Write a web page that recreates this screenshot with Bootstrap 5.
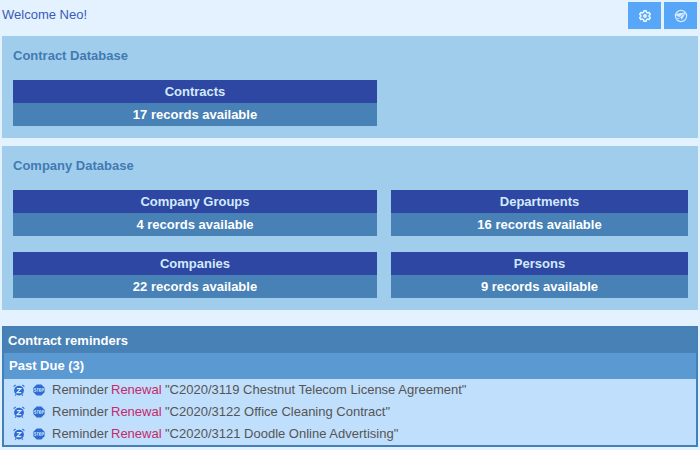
<!DOCTYPE html>
<html lang="en">
<head>
<meta charset="utf-8">
<meta name="viewport" content="width=device-width, initial-scale=1">
<title>Contract Database</title>
<link href="https://cdn.jsdelivr.net/npm/bootstrap@5.3.0/dist/css/bootstrap.min.css" rel="stylesheet">
<style>
body { background: #e4f1fe; font-family: "Liberation Sans", Arial, sans-serif; font-size: 13px; line-height: 18px; color: #555; padding: 2px 2px 4px; }
.top-bar { margin-bottom: 7px; }
.welcome { color: #3a5cb8; padding-top: 4px; }
.tool-btn { width: 33px; height: 27px; background: #57a6f7; border-radius: 0; }
.tool-btn:hover { background: #3f93ea; }
.tools { gap: 3px; padding-right: 1px; }
.db-panel { background: #a1cdec; padding: 11px 10px 12px 11px; }
.db-title { color: #427ab3; font-size: 13px; line-height: 18px; margin-bottom: 15px; }
.tiles { display: grid; grid-template-columns: 364fr 297fr; gap: 16px 14px; }
.tile-name { background: #2e47a3; color: #d3eafc; line-height: 23px; }
.tile-count { background: #4781b5; color: #fff; line-height: 23px; }
.reminders { background: #c0dffc; border: 2px solid #4480b7; margin-top: 16px; }
.rem-head { background: #4781b5; font-size: 13px; line-height: 25px; padding-left: 4px; }
.rem-sub { background: #5b99d2; font-size: 13px; line-height: 26px; padding-left: 5px; }
.rem-row { line-height: 22px; padding-left: 8px; }
.rem-icons { gap: 6px; margin-right: 6px; }
.rem-icon { width: 14px; height: 14px; line-height: 0; }
.rem-type { width: 59px; }
.rem-kind { color: #c42a6c; width: 54px; }
.rem-name { color: #555; }
</style>
</head>
<body>
<svg width="0" height="0" class="position-absolute" aria-hidden="true">
  <symbol id="snooze" viewBox="0 0 14 14">
    <circle cx="7" cy="7.6" r="4.9" fill="#2c6bd2"/>
    <path d="M1.6 3.6 3.6 2M12.4 3.6 10.4 2M4 11.5 3.2 12.6M10 11.5l.8 1.1" stroke="#2c6bd2" stroke-width="1.2" fill="none"/>
    <path d="M4.8 5.7h4.1L5.1 9.6h4.2" stroke="#d5eaff" stroke-width="1.2" fill="none"/>
  </symbol>
  <symbol id="stop" viewBox="0 0 14 14">
    <path d="M4.7 1.4h4.6l3.3 3.3v4.6l-3.3 3.3H4.7L1.4 9.3V4.7z" fill="#2c6bd2"/>
    <path d="M4.2 5.6H2.6v1.3h1.5v1.5H2.3M4.8 5.6h2M5.8 5.6v3.1M7.5 5.6h1.4v2.8H7.5zM10.1 8.8V5.6h1.5v1.6h-1.5" stroke="#b9d8fb" stroke-width=".9" fill="none"/>
  </symbol>
</svg>
<header class="top-bar d-flex justify-content-between align-items-start">
  <div class="welcome">Welcome Neo!</div>
  <div class="tools d-flex">
    <button type="button" class="btn tool-btn p-0 border-0 d-flex align-items-center justify-content-center" aria-label="Settings">
      <svg width="14" height="14" viewBox="0 0 14 14" fill="none" stroke="#edf7ff" stroke-width="1.5" stroke-linejoin="round"><path d="M5.9 1.7h2.2l.4 1.6 1.1.6 1.6-.4 1.1 1.9L11.1 6.5v1l1.2 1.1-1.1 1.9-1.6-.4-1.1.6-.4 1.6H5.9l-.4-1.6-1.1-.6-1.6.4-1.1-1.9 1.2-1.1v-1L1.7 5.4l1.1-1.9 1.6.4 1.1-.6z"/><circle cx="7" cy="7" r="1.2"/></svg>
    </button>
    <button type="button" class="btn tool-btn p-0 border-0 d-flex align-items-center justify-content-center" aria-label="Navigate">
      <svg width="14" height="14" viewBox="0 0 14 14" fill="none"><circle cx="7" cy="7" r="5.6" stroke="#d6ebff" stroke-width="1.2"/><path d="M2 4.8 11.9 3.3 7.8 10.8 6.3 8.2 2.4 7z" fill="#d6ebff"/><path d="M6 7.8 10 4.5" stroke="#57a6f7" stroke-width=".7"/><path d="M3 9.3h2.6" stroke="#d6ebff" stroke-width=".9"/></svg>
    </button>
  </div>
</header>
<main>
  <section class="db-panel mb-2">
    <h2 class="db-title fw-bold">Contract Database</h2>
    <div class="tiles fw-bold text-center">
      <a href="#contracts" class="d-block text-decoration-none"><div class="tile-name">Contracts</div><div class="tile-count">17 records available</div></a>
    </div>
  </section>
  <section class="db-panel">
    <h2 class="db-title fw-bold">Company Database</h2>
    <div class="tiles fw-bold text-center">
      <a href="#groups" class="d-block text-decoration-none"><div class="tile-name">Company Groups</div><div class="tile-count">4 records available</div></a>
      <a href="#departments" class="d-block text-decoration-none"><div class="tile-name">Departments</div><div class="tile-count">16 records available</div></a>
      <a href="#companies" class="d-block text-decoration-none"><div class="tile-name">Companies</div><div class="tile-count">22 records available</div></a>
      <a href="#persons" class="d-block text-decoration-none"><div class="tile-name">Persons</div><div class="tile-count">9 records available</div></a>
    </div>
  </section>
  <section class="reminders">
    <h2 class="rem-head text-white fw-bold mb-0">Contract reminders</h2>
    <h3 class="rem-sub text-white fw-bold mb-0">Past Due (3)</h3>
    <ul class="list-unstyled mb-0">
      <li class="rem-row d-flex align-items-center">
        <div class="rem-icons d-flex"><button type="button" class="btn p-0 border-0 rem-icon" aria-label="Snooze"><svg width="14" height="14"><use href="#snooze"/></svg></button>
        <button type="button" class="btn p-0 border-0 rem-icon" aria-label="Stop"><svg width="14" height="14"><use href="#stop"/></svg></button></div>
        <span class="rem-type">Reminder</span><span class="rem-kind">Renewal</span><a href="#c3119" class="rem-name text-decoration-none">"C2020/3119 Chestnut Telecom License Agreement"</a>
      </li>
      <li class="rem-row d-flex align-items-center">
        <div class="rem-icons d-flex"><button type="button" class="btn p-0 border-0 rem-icon" aria-label="Snooze"><svg width="14" height="14"><use href="#snooze"/></svg></button>
        <button type="button" class="btn p-0 border-0 rem-icon" aria-label="Stop"><svg width="14" height="14"><use href="#stop"/></svg></button></div>
        <span class="rem-type">Reminder</span><span class="rem-kind">Renewal</span><a href="#c3122" class="rem-name text-decoration-none">"C2020/3122 Office Cleaning Contract"</a>
      </li>
      <li class="rem-row d-flex align-items-center">
        <div class="rem-icons d-flex"><button type="button" class="btn p-0 border-0 rem-icon" aria-label="Snooze"><svg width="14" height="14"><use href="#snooze"/></svg></button>
        <button type="button" class="btn p-0 border-0 rem-icon" aria-label="Stop"><svg width="14" height="14"><use href="#stop"/></svg></button></div>
        <span class="rem-type">Reminder</span><span class="rem-kind">Renewal</span><a href="#c3121" class="rem-name text-decoration-none">"C2020/3121 Doodle Online Advertising"</a>
      </li>
    </ul>
  </section>
</main>
<script src="https://cdn.jsdelivr.net/npm/bootstrap@5.3.0/dist/js/bootstrap.bundle.min.js"></script>
</body>
</html>
